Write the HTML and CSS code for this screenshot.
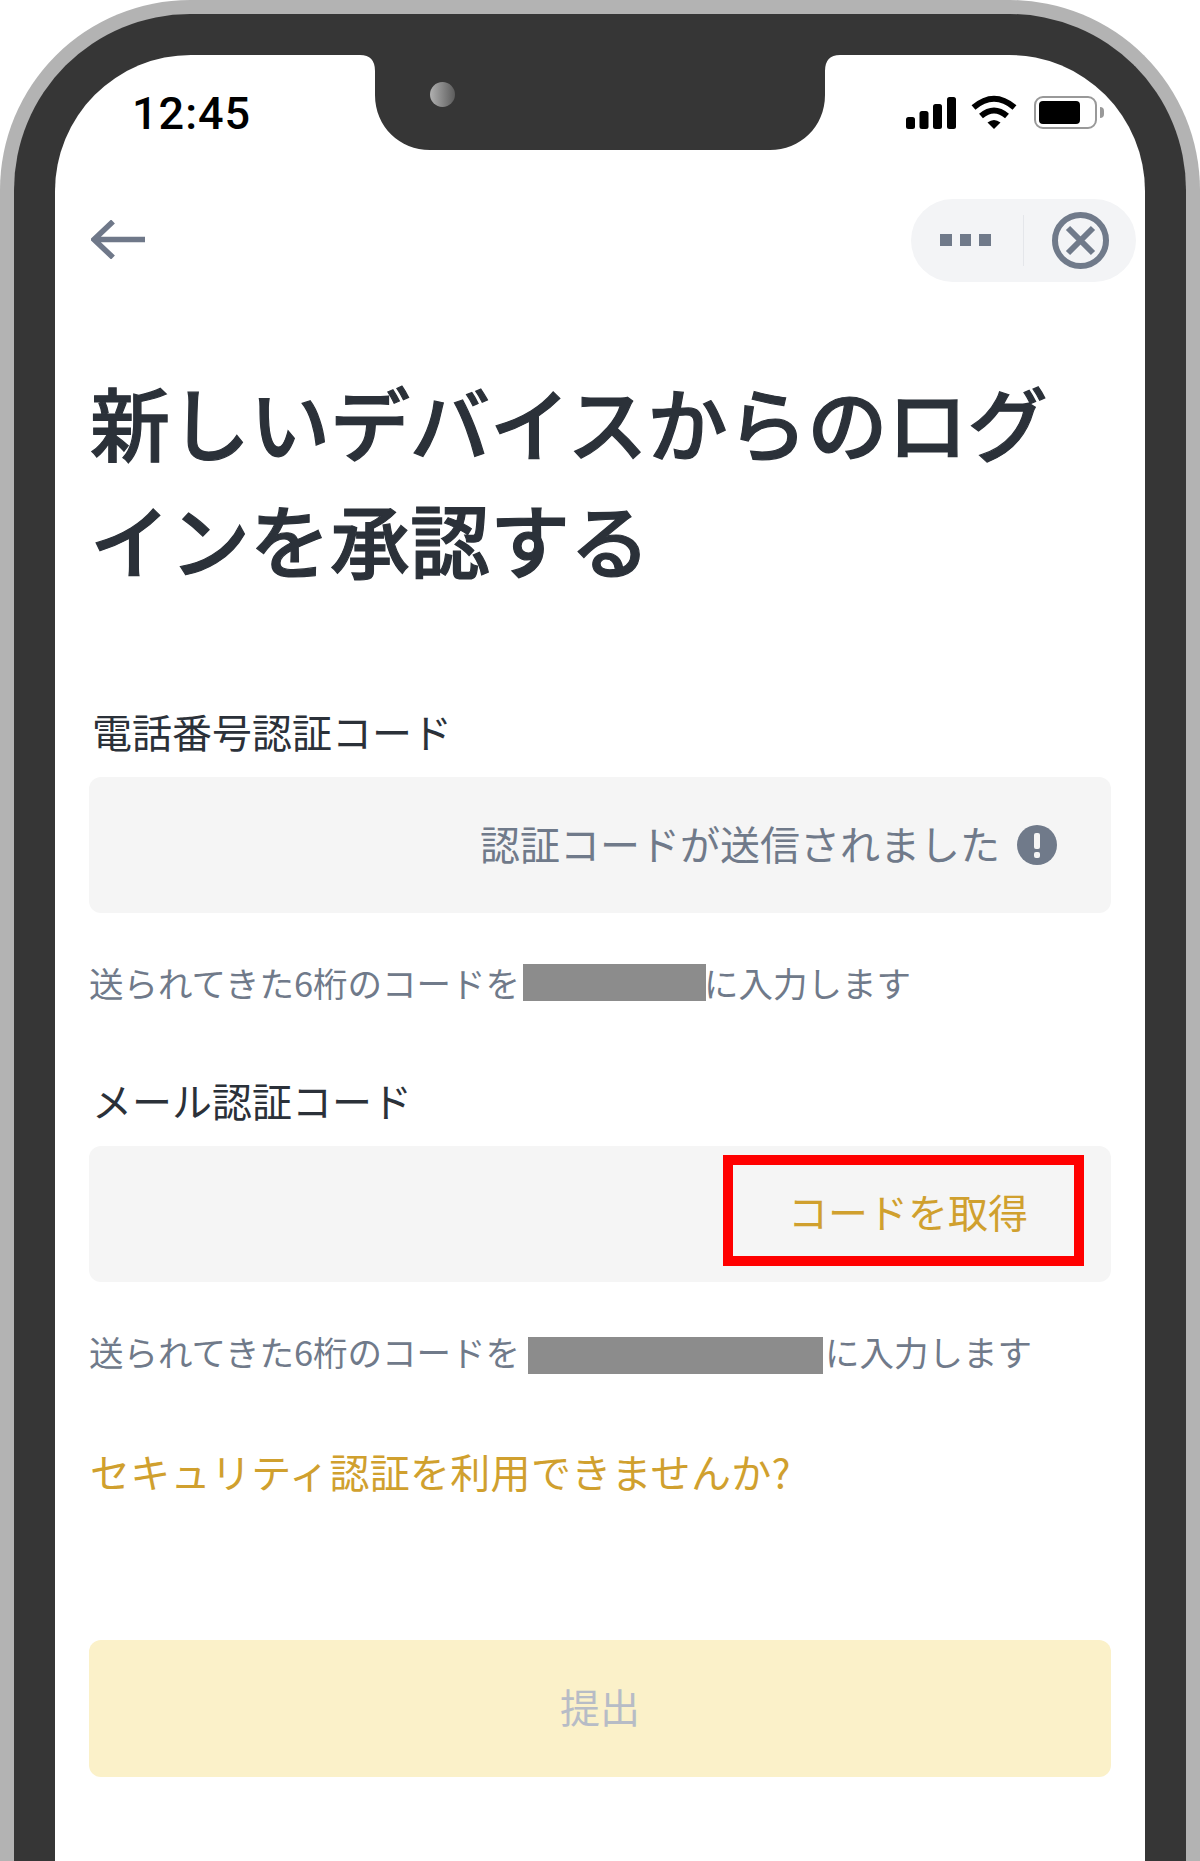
FILE: index.html
```html
<!DOCTYPE html>
<html lang="ja">
<head>
<meta charset="utf-8">
<title>新しいデバイスからのログインを承認する</title>
<link rel="stylesheet" href="styles.css">
</head>
<body>
<div class="phone">
  <div class="screen">
    <svg class="notch" viewBox="0 0 480 95" aria-hidden="true"><path d="M0 0Q15 0 15 16V40C15 72 40 95 70 95H410C440 95 465 72 465 40V16Q465 0 480 0Z"/></svg>
    <span class="camera"></span>
    <header class="status">
      <span class="time">12:45</span>
      <div class="status-icons">
        <svg class="signal" viewBox="0 0 50 32" aria-hidden="true"><rect x="0" y="20" width="9" height="12" rx="2.5"/><rect x="13.500" y="14" width="9" height="18" rx="2.5"/><rect x="27" y="7" width="9" height="25" rx="2.5"/><rect x="41" y="0" width="9" height="32" rx="2.5"/></svg>
        <svg class="wifi" viewBox="0 0 46 34" aria-hidden="true"><path class="wifi-arc" d="M2.500 12.500Q23-5 43.500 12.500"/><path class="wifi-arc" d="M10 21Q23 10 36 21"/><path d="M16.500 27.500Q23 22.500 29.500 27.500L23 34Z"/></svg>
        <div class="battery"><span class="battery-level"></span></div>
        <span class="battery-cap"></span>
      </div>
    </header>
    <nav class="nav">
      <svg class="back" viewBox="0 0 54 39" aria-hidden="true"><path d="M54 19.500H3M22 1.500L3 19.500L22 37.500"/></svg>
      <div class="capsule">
        <div class="dots"><i></i><i></i><i></i></div>
        <span class="divider"></span>
        <svg class="close" viewBox="0 0 57 57" aria-hidden="true"><circle cx="28.500" cy="28.500" r="25.500"/><path d="M16 16L41 41M41 16L16 41"/></svg>
      </div>
    </nav>
    <main class="content">
      <h1 class="title">新しいデバイスからのログインを承認する</h1>
      <label class="label label-phone">電話番号認証コード</label>
      <div class="field field-sent">
        <span class="sent-text">認証コードが送信されました</span>
        <svg class="alert" viewBox="0 0 40 40" aria-hidden="true"><circle cx="20" cy="20" r="20"/><rect x="17" y="8" width="6" height="16" rx="2"/><rect x="17" y="27" width="6" height="6" rx="2"/></svg>
      </div>
      <p class="helper">送られてきた6桁のコードを<span class="mask mask-phone"></span>に入力します</p>
      <label class="label label-mail">メール認証コード</label>
      <div class="field field-mail">
        <div class="get-code"><span>コードを取得</span></div>
      </div>
      <p class="helper">送られてきた6桁のコードを<span class="mask mask-mail"></span>に入力します</p>
      <a class="link">セキュリティ認証を利用できませんか?</a>
      <button class="submit" type="button">提出</button>
    </main>
  </div>
</div>
</body>
</html>
```
FILE: styles.css
```css
html, body {
  margin: 0;
  height: 1861px;
  overflow: hidden;
  background: #fff;
}
* { box-sizing: border-box; }
body {
  font-family: "Noto Sans CJK JP", "Noto Sans", sans-serif;
}
.phone {
  width: 1200px;
  height: 1861px;
  padding: 41px 41px 0;
  background: #363636;
  border: 14px solid #b3b3b3;
  border-bottom: 0;
  border-radius: 190px 190px 0 0;
}
.screen {
  position: relative;
  height: 100%;
  background: #fff;
  border-radius: 136px 136px 0 0;
}
.notch {
  position: absolute;
  left: 305px;
  top: 0;
  width: 480px;
  height: 95px;
  fill: #363636;
}
.camera {
  position: absolute;
  left: 375px;
  top: 27px;
  width: 25px;
  height: 25px;
  border-radius: 50%;
  background: linear-gradient(90deg, #b0b0b0, #5c5c5c);
}
.status {
  display: flex;
  justify-content: space-between;
  align-items: flex-end;
  height: 74px;
  padding: 41px 41px 0 77px;
}
.time {
  font-family: Roboto, "Liberation Sans", sans-serif;
  font-weight: 500;
  font-size: 45px;
  line-height: 31px;
  letter-spacing: 1px;
  color: #000;
}
.status-icons {
  display: flex;
  align-items: flex-end;
}
.signal { width: 50px; height: 32px; fill: #000; }
.wifi { width: 46px; height: 34px; margin-left: 15px; fill: #000; }
.wifi-arc { fill: none; stroke: #000; stroke-width: 6px; }
.battery {
  width: 63px;
  height: 33px;
  margin-left: 17px;
  padding: 3px;
  border: 2.5px solid #999;
  border-radius: 9px;
}
.battery-level {
  display: block;
  width: 41px;
  height: 23px;
  background: #000;
  border-radius: 4px;
}
.battery-cap {
  width: 4px;
  height: 11px;
  margin: 0 0 11px 3px;
  background: #999;
  border-radius: 0 4px 4px 0;
}
.nav {
  display: flex;
  justify-content: space-between;
  align-items: center;
  height: 83px;
  margin-top: 70px;
  padding: 0 9px 0 36px;
}
.back {
  width: 54px;
  height: 39px;
  margin-top: -2px;
  fill: none;
  stroke: #6f7889;
  stroke-width: 5.5px;
}
.capsule {
  display: flex;
  align-items: center;
  width: 225px;
  height: 83px;
  padding-left: 29px;
  background: #f3f4f6;
  border-radius: 42px;
}
.dots { display: flex; gap: 8px; width: 51px; margin-top: -2px; }
.dots i {
  width: 11.5px;
  height: 12px;
  background: #707a8a;
}
.divider {
  width: 1px;
  height: 51px;
  margin-left: 32px;
  background: #e4e6ea;
}
.close {
  width: 57px;
  height: 57px;
  margin-left: 28px;
  margin-top: -1px;
  fill: none;
  stroke: #707a8a;
  stroke-width: 6px;
}
.content {
  display: flex;
  flex-direction: column;
  align-items: flex-start;
  padding: 0 34px;
}
.title {
  margin: 80px 0 0;
  padding-left: 1px;
  font-size: 80px;
  line-height: 117px;
  font-weight: 500;
  -webkit-text-stroke: 1.2px #2b3139;
  color: #2b3139;
}
.label {
  margin-top: 110px;
  padding-left: 3px;
  font-size: 40px;
  line-height: 50px;
  font-weight: 400;
  color: #2b3139;
}
.label-mail { margin-top: 68px; }
.field {
  display: flex;
  width: 100%;
  height: 136px;
  margin-top: 21px;
  background: #f5f5f5;
  border-radius: 12px;
}
.field-sent {
  justify-content: flex-end;
  align-items: center;
  gap: 17px;
  padding-right: 54px;
  font-size: 40px;
  color: #707a8a;
}
.sent-text { font-weight: 400; line-height: 50px; margin-bottom: 4px; }
.alert { width: 40px; height: 40px; fill: #707a8a; }
.alert rect { fill: #f5f5f5; }
.field-mail {
  margin-top: 21px;
  justify-content: flex-end;
  align-items: flex-start;
  padding: 9px 27px 0 0;
}
.get-code {
  display: flex;
  justify-content: flex-end;
  align-items: center;
  width: 361px;
  height: 111px;
  padding: 0 46px 0 0;
  border: 10px solid #f00;
  font-size: 40px;
  line-height: 50px;
  color: #d0a02e;
}
.helper {
  display: flex;
  align-items: center;
  height: 50px;
  margin: 44px 0 0;
  font-size: 34.5px;
  color: #707a8a;
}
.mask {
  display: block;
  height: 37px;
  background: #8c8c8c;
}
.mask-phone { width: 183px; margin: 0 -2px 0 3px; }
.mask-mail { width: 295px; margin: 8px 2px 0 8px; }
.link {
  margin-top: 70px;
  padding-left: 1px;
  font-size: 40px;
  line-height: 50px;
  letter-spacing: 0.3px;
  color: #d0a02e;
}
.submit {
  display: block;
  width: 100%;
  height: 137px;
  margin-top: 144px;
  padding: 0 0 6px;
  border: 0;
  border-radius: 12px;
  background: #fbf1c9;
  font-family: inherit;
  font-size: 40px;
  color: #b7bcc6;
}
```
